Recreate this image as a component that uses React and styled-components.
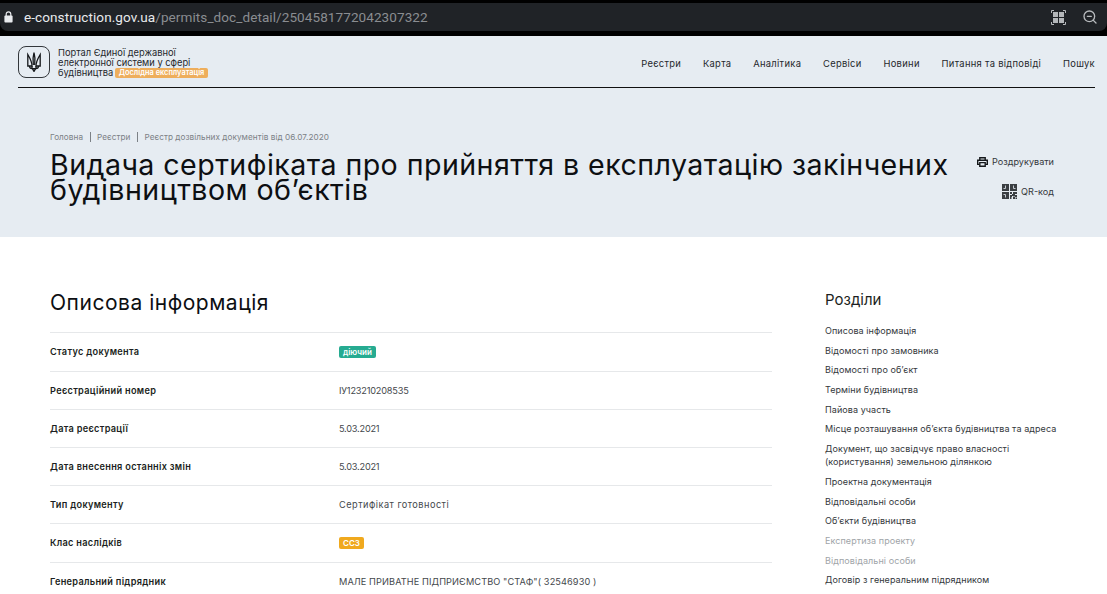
import React from 'react';
import styled, { createGlobalStyle } from 'styled-components';
import { ZoomOut } from 'lucide-react';

const GlobalStyle = createGlobalStyle`
  html, body {
    margin: 0;
    padding: 0;
    height: 594px;
    overflow: hidden;
    background: #fff;
    font-family: Inter, "Liberation Sans", sans-serif;
  }
  * {
    box-sizing: border-box;
  }
`;

const navItems = ['Реєстри', 'Карта', 'Аналітика', 'Сервіси', 'Новини', 'Питання та відповіді', 'Пошук'];

const rows = [
  { label: 'Статус документа', badge: 'діючий', color: '#26ab91', tall: true },
  { label: 'Реєстраційний номер', value: 'ІУ123210208535', track: -0.2 },
  { label: 'Дата реєстрації', value: '5.03.2021', track: -0.23 },
  { label: 'Дата внесення останніх змін', value: '5.03.2021', track: -0.23 },
  { label: 'Тип документу', value: 'Сертифікат готовності', track: 0.48 },
  { label: 'Клас наслідків', badge: 'СС3', color: '#f0a91e', tall: true },
  { label: 'Генеральний підрядник', value: 'МАЛЕ ПРИВАТНЕ ПІДПРИЄМСТВО "СТАФ"( 32546930 )', track: 0.1 },
];

const sections = [
  { text: 'Описова інформація' },
  { text: 'Відомості про замовника' },
  { text: 'Відомості про об’єкт' },
  { text: 'Терміни будівництва' },
  { text: 'Пайова участь' },
  { text: 'Місце розташування об’єкта будівництва та адреса' },
  { text: 'Документ, що засвідчує право власності (користування) земельною ділянкою' },
  { text: 'Проектна документація' },
  { text: 'Відповідальні особи' },
  { text: 'Об’єкти будівництва' },
  { text: 'Експертиза проекту', muted: true },
  { text: 'Відповідальні особи', muted: true },
  { text: 'Договір з генеральним підрядником' },
];

function Trident() {
  return (
    <svg width="14" height="20" viewBox="0 0 14 20" fill="none" stroke="#15181b" strokeWidth="1.3">
      <path d="M7 .8 C6 4 5.8 9 6.3 13 M7 .8 C8 4 8.2 9 7.7 13" />
      <path d="M.8 2.5 V14 H5 C5 10 3.2 6.5 .8 2.5 Z" />
      <path d="M13.2 2.5 V14 H9 C9 10 10.8 6.5 13.2 2.5 Z" />
      <path d="M2.5 14 C2.6 16 4 16.6 5 16.6 H9 C10 16.6 11.4 16 11.5 14 M5 14 V16.6 M9 14 V16.6 M5.4 16.6 L7 19.4 L8.6 16.6" />
    </svg>
  );
}

function QrIcon() {
  return (
    <svg width="15" height="15" viewBox="0 0 15 15">
      <path fill="#3a3e42" d="M0 0H7V7H0Z M8 0H15V7H8Z M0 8H7V15H0Z" />
      <path
        fill="none"
        stroke="#c6ccd2"
        strokeWidth="1"
        d="M3.5 1.5V4.5H1.5 M11.5 1.5V4.5H13.5 M3.5 13.5V10.5H1.5"
      />
      <path
        fill="#3a3e42"
        d="M8 8H10V10H8Z M11 8H13V10H11Z M13 8H15V10H13Z M10 10H13V12H10Z M8 11H10V13H8Z M13 11H15V13H13Z M8 13H9.5V15H8Z M11 12.5H13V15H11Z M13.5 13.5H15V15H13.5Z"
      />
    </svg>
  );
}

function PrintIcon() {
  return (
    <svg width="11" height="10" viewBox="0 0 11 10" fill="none" stroke="#15181b" strokeWidth="1.4">
      <path d="M2.8 3.2V.7H8.2V3.2" />
      <path d="M2.6 7.4H.7V3.2H10.3V7.4H8.4" />
      <path d="M2.8 5.6H8.2V9.3H2.8Z" />
    </svg>
  );
}

function LockIcon() {
  return (
    <svg width="9" height="12" viewBox="0 0 9 12">
      <path fill="none" stroke="#e8eaed" strokeWidth="1.2" d="M2.2 5V3.2C2.2 1.8 3.2 .9 4.5 .9S6.8 1.8 6.8 3.2V5" />
      <rect x="0.4" y="4.6" width="8.2" height="7" rx="1" fill="#e8eaed" />
    </svg>
  );
}

function ExtensionIcon() {
  return (
    <svg width="15" height="15" viewBox="0 0 15 15">
      <path fill="none" stroke="#b7babd" d="M.5 3V.5H3 M12 .5H14.5V3 M14.5 12V14.5H12 M3 14.5H.5V12" />
      <path fill="#b4b7ba" d="M2 2H7V7H2Z M8 2H13V7H8Z M2 8H7V13H2Z M8 8H13V13H8Z" />
    </svg>
  );
}

export default function App() {
  return (
    <Page>
      <GlobalStyle />
      <BrowserChrome>
        <AddressBar>
          <LockIcon />
          <Url>
            e-construction.gov.ua<UrlPath>/permits_doc_detail/2504581772042307322</UrlPath>
          </Url>
          <BarIcons>
            <ExtensionIcon />
            <ZoomOut size={16} color="#b7babd" strokeWidth={2} />
          </BarIcons>
        </AddressBar>
      </BrowserChrome>

      <Hero>
        <Header>
          <Brand>
            <LogoBox>
              <Trident />
            </LogoBox>
            <BrandText>
              Портал Єдиної державної
              <br />
              електронної системи у сфері
              <br />
              будівництва <PilotBadge>Дослідна експлуатація</PilotBadge>
            </BrandText>
          </Brand>
          <Nav>
            {navItems.map(item => (
              <NavLink key={item}>{item}</NavLink>
            ))}
          </Nav>
        </Header>

        <HeroBody>
          <HeroMain>
            <Crumbs>
              <span>Головна</span>
              <CrumbBar />
              <span>Реєстри</span>
              <CrumbBar />
              <span>Реєстр дозвільних документів від 06.07.2020</span>
            </Crumbs>
            <Title>Видача сертифіката про прийняття в експлуатацію закінчених будівництвом об’єктів</Title>
          </HeroMain>
          <HeroActions>
            <Action>
              <PrintIcon />
              Роздрукувати
            </Action>
            <Action>
              <QrIcon />
              QR-код
            </Action>
          </HeroActions>
        </HeroBody>
      </Hero>

      <Content>
        <Info>
          <InfoTitle>Описова інформація</InfoTitle>
          <Table>
            {rows.map(row => (
              <Row key={row.label} $tall={row.tall}>
                <RowLabel>{row.label}</RowLabel>
                {row.badge ? (
                  <Badge $color={row.color}>{row.badge}</Badge>
                ) : (
                  <RowValue $track={row.track}>{row.value}</RowValue>
                )}
              </Row>
            ))}
          </Table>
        </Info>
        <Sidebar>
          <SidebarTitle>Розділи</SidebarTitle>
          <SectionList>
            {sections.map(section => (
              <SectionItem key={section.text} $muted={section.muted}>
                {section.text}
              </SectionItem>
            ))}
          </SectionList>
        </Sidebar>
      </Content>
    </Page>
  );
}

const Page = styled.div`
  width: 1107px;
  height: 594px;
  overflow: hidden;
  background: #fff;
`;

const BrowserChrome = styled.div`
  height: 36px;
  padding-top: 3px;
  background: #000;
`;

const AddressBar = styled.div`
  display: flex;
  align-items: center;
  height: 28px;
  padding: 0 9px 0 4px;
  background: #202327;
  border-radius: 0 0 8px 8px;
`;

const Url = styled.div`
  margin-left: 11px;
  font-family: Roboto, sans-serif;
  font-size: 13.55px;
  letter-spacing: 0.07px;
  color: #e8eaed;
`;

const UrlPath = styled.span`
  color: #8a8d91;
`;

const BarIcons = styled.div`
  display: flex;
  align-items: center;
  gap: 16px;
  margin-left: auto;
`;

const Hero = styled.section`
  height: 201px;
  padding: 0 12px 0 18px;
  background: #e6ecf2;
`;

const Header = styled.header`
  display: flex;
  align-items: center;
  justify-content: space-between;
  height: 52px;
  padding-top: 1px;
  border-bottom: 1px solid #111;
`;

const Brand = styled.div`
  display: flex;
  align-items: center;
  gap: 8px;
`;

const LogoBox = styled.div`
  display: flex;
  align-items: center;
  justify-content: center;
  width: 32px;
  height: 32px;
  border: 1px solid #33373b;
  border-radius: 8px;
`;

const BrandText = styled.div`
  padding-top: 1px;
  font-size: 9.3px;
  line-height: 10px;
  color: #25282c;
`;

const PilotBadge = styled.span`
  display: inline-block;
  margin-left: -1px;
  padding: 0 4px;
  height: 10px;
  border-radius: 2px;
  background: #eeae5c;
  color: #fff;
  font-size: 7.4px;
  font-weight: 600;
  line-height: 10px;
  vertical-align: top;
`;

const Nav = styled.nav`
  display: flex;
  gap: 21.8px;
  margin-top: 2px;
`;

const NavLink = styled.a`
  font-size: 9.4px;
  letter-spacing: 0.3px;
  color: #25282c;
`;

const HeroBody = styled.div`
  display: flex;
  justify-content: space-between;
  padding: 44px 41px 0 32px;
`;

const HeroMain = styled.div`
  width: 920px;
`;

const Crumbs = styled.div`
  display: flex;
  align-items: center;
  gap: 6.5px;
  font-size: 8.2px;
  letter-spacing: 0.05px;
  color: #7c8186;
`;

const CrumbBar = styled.i`
  width: 1px;
  height: 10px;
  background: #7c8186;
`;

const Title = styled.h1`
  margin: 10px 0 0;
  font-size: 28.6px;
  font-weight: 400;
  line-height: 25px;
  letter-spacing: 0.44px;
  color: #0d0f12;
`;

const HeroActions = styled.div`
  display: flex;
  flex-direction: column;
  align-items: flex-end;
  gap: 15px;
  padding-top: 22px;
`;

const Action = styled.a`
  display: flex;
  align-items: center;
  gap: 4px;
  min-height: 15px;
  font-size: 9.1px;
  color: #33373b;
`;

const Content = styled.main`
  display: flex;
  padding: 53px 0 0 50px;
`;

const Info = styled.div`
  width: 722px;
`;

const InfoTitle = styled.h2`
  margin: 0 0 16px;
  font-size: 21px;
  font-weight: 400;
  line-height: 26px;
  letter-spacing: 0.52px;
  color: #0d0f12;
`;

const Table = styled.div`
  border-top: 1px solid #e6e8ea;
`;

const Row = styled.div`
  display: grid;
  grid-template-columns: 289px 1fr;
  align-items: center;
  height: ${p => (p.$tall ? '39px' : '38px')};
  padding-bottom: ${p => (p.$tall ? '1px' : '0')};
  border-bottom: 1px solid #e6e8ea;
`;

const RowLabel = styled.div`
  font-size: 9.2px;
  font-weight: 600;
  letter-spacing: 0.3px;
  color: #1c1f22;
`;

const RowValue = styled.div`
  font-size: 9.2px;
  letter-spacing: ${p => p.$track}px;
  color: #44484c;
`;

const Badge = styled.span`
  justify-self: start;
  padding: 0 4px;
  height: 12px;
  border-radius: 2px;
  background: ${p => p.$color};
  color: #fff;
  font-size: 8px;
  font-weight: 600;
  line-height: 12px;
`;

const Sidebar = styled.aside`
  width: 240px;
  margin-left: 53px;
`;

const SidebarTitle = styled.h3`
  margin: 0 0 14px;
  font-size: 15px;
  font-weight: 400;
  line-height: 20px;
  color: #1c1f22;
`;

const SectionList = styled.div`
  display: flex;
  flex-direction: column;
  gap: 6.7px;
`;

const SectionItem = styled.a`
  font-size: 9px;
  line-height: 13px;
  letter-spacing: 0.08px;
  color: ${p => (p.$muted ? '#a0a4a8' : '#33373b')};
`;
